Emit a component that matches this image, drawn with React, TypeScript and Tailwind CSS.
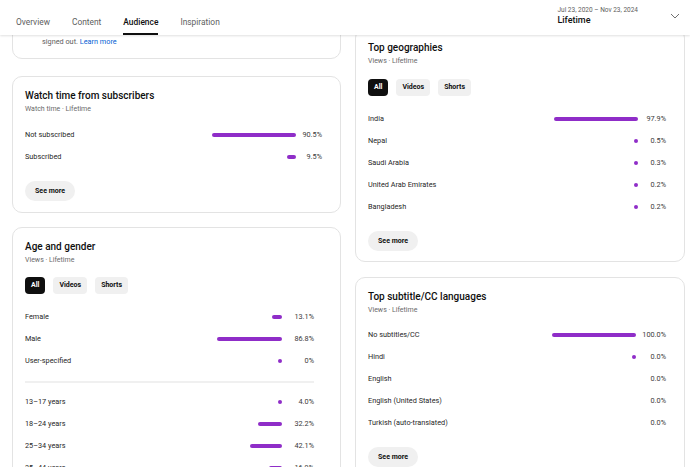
import React from 'react';

type Row = { label: string; pct: string; bar: number | 'dot' | 'none' };

const PURPLE = 'bg-[#8f2dc8]';

function StatRow({ row, maxBar, pctW }: { row: Row; maxBar: number; pctW: string }) {
  return (
    <div className="flex h-[22px] items-center text-[7.3px] text-[#1f1f1f]">
      <div className="flex-1 truncate">{row.label}</div>
      <div className="flex items-center justify-end" style={{ width: maxBar }}>
        {row.bar === 'dot' ? (
          <div className={`h-[4.5px] w-[4.5px] rounded-full ${PURPLE}`} />
        ) : row.bar === 'none' ? null : (
          <div className={`h-[3.5px] rounded-full ${PURPLE}`} style={{ width: (row.bar / 100) * maxBar }} />
        )}
      </div>
      <div className={`${pctW} text-right text-[#3a3a3a]`}>{row.pct}</div>
    </div>
  );
}

function Chips() {
  return (
    <div className="flex gap-[8px] text-[7px] font-bold">
      <div className="flex h-[17px] items-center rounded-[4px] bg-[#0f0f0f] px-[6px] text-white">All</div>
      <div className="flex h-[17px] items-center rounded-[4px] bg-[#f0f0f0] px-[6px] text-[#0f0f0f]">Videos</div>
      <div className="flex h-[17px] items-center rounded-[4px] bg-[#f0f0f0] px-[6px] text-[#0f0f0f]">Shorts</div>
    </div>
  );
}

function SeeMore({ className = '' }: { className?: string }) {
  return (
    <div className={`flex h-[20px] w-[50px] items-center justify-center rounded-full bg-[#f0f0f0] text-[7px] font-bold text-[#0f0f0f] ${className}`}>
      See more
    </div>
  );
}

function CardHead({ title, sub }: { title: string; sub: string }) {
  return (
    <div>
      <div className="text-[10px] font-medium leading-[12px] text-[#0f0f0f]">{title}</div>
      <div className="mt-[2px] text-[7px] leading-[10px] text-[#6a6a6a]">{sub}</div>
    </div>
  );
}

const subs: Row[] = [
  { label: 'Not subscribed', pct: '90.5%', bar: 90.5 },
  { label: 'Subscribed', pct: '9.5%', bar: 9.5 },
];

const gender: Row[] = [
  { label: 'Female', pct: '13.1%', bar: 13.1 },
  { label: 'Male', pct: '86.8%', bar: 86.8 },
  { label: 'User-specified', pct: '0%', bar: 'dot' },
];

const ages: Row[] = [
  { label: '13–17 years', pct: '4.0%', bar: 'dot' },
  { label: '18–24 years', pct: '32.2%', bar: 32.2 },
  { label: '25–34 years', pct: '42.1%', bar: 42.1 },
  { label: '35–44 years', pct: '16.9%', bar: 16.9 },
];

const geos: Row[] = [
  { label: 'India', pct: '97.9%', bar: 97.9 },
  { label: 'Nepal', pct: '0.5%', bar: 'dot' },
  { label: 'Saudi Arabia', pct: '0.3%', bar: 'dot' },
  { label: 'United Arab Emirates', pct: '0.2%', bar: 'dot' },
  { label: 'Bangladesh', pct: '0.2%', bar: 'dot' },
];

const langs: Row[] = [
  { label: 'No subtitles/CC', pct: '100.0%', bar: 100 },
  { label: 'Hindi', pct: '0.0%', bar: 'dot' },
  { label: 'English', pct: '0.0%', bar: 'none' },
  { label: 'English (United States)', pct: '0.0%', bar: 'none' },
  { label: 'Turkish (auto-translated)', pct: '0.0%', bar: 'none' },
];

const tabs = ['Overview', 'Content', 'Audience', 'Inspiration'];

export default function App() {
  return (
    <div className="relative h-[467px] w-[690px] overflow-hidden bg-white font-['Roboto',sans-serif]">
      <div className="relative z-10 flex h-[35px] justify-between bg-white shadow-[0_1px_2px_rgba(0,0,0,0.12)]">
        <div className="flex gap-[22px] pl-[16px]">
          {tabs.map(t => (
            <div key={t} className="flex h-[35px] items-end">
              <span
                className={`border-b-2 pb-[5px] text-[8.4px] leading-[11px] ${
                  t === 'Audience' ? 'border-[#0f0f0f] font-medium text-[#0f0f0f]' : 'border-transparent text-[#606060]'
                }`}
              >
                {t}
              </span>
            </div>
          ))}
        </div>
        <div className="flex items-center gap-[32px] self-start pr-[10px] pt-[5px]">
          <div>
            <div className="text-[6.5px] leading-[10px] text-[#606060]">Jul 23, 2020 – Nov 23, 2024</div>
            <div className="text-[9px] font-medium leading-[11px] text-[#0f0f0f]">Lifetime</div>
          </div>
          <svg width="10" height="6" viewBox="0 0 10 6" fill="none" stroke="#606060" strokeWidth="0.9">
            <path d="M1 1l4 4 4-4" />
          </svg>
        </div>
      </div>

      <div className="flex gap-[14px] px-[12px]">
        {/* left column */}
        <div className="-mt-[40px] w-[329px] shrink-0">
          <div className="flex h-[64px] flex-col justify-end rounded-[10px] border border-[#e3e3e3] pb-[11px] pl-[29px]">
            <div className="text-[7.3px] leading-[10px] text-[#606060]">
              signed out. <span className="text-[#065fd4]">Learn more</span>
            </div>
          </div>

          <div className="mt-[17px] rounded-[10px] border border-[#e3e3e3] px-[12px] pb-[11px] pt-[13px]">
            <CardHead title="Watch time from subscribers" sub="Watch time · Lifetime" />
            <div className="mt-[10px] pr-[6px]">
              {subs.map(r => (
                <StatRow key={r.label} row={r} maxBar={93} pctW="w-[26px]" />
              ))}
            </div>
            <SeeMore className="mt-[13px]" />
          </div>

          <div className="mt-[14px] rounded-[10px] border border-[#e3e3e3] px-[12px] pt-[13px] pb-[12px]">
            <CardHead title="Age and gender" sub="Views · Lifetime" />
            <div className="mt-[12px]">
              <Chips />
            </div>
            <div className="mt-[12px] pr-[14px]">
              {gender.map(r => (
                <StatRow key={r.label} row={r} maxBar={75} pctW="w-[32px]" />
              ))}
              <div className="mb-[8px] mt-[9px] h-[2px] bg-[#f0f0f0]" />
              {ages.map(r => (
                <StatRow key={r.label} row={r} maxBar={75} pctW="w-[32px]" />
              ))}
            </div>
          </div>
        </div>

        {/* right column */}
        <div className="-mt-[7px] w-[330px] shrink-0">
          <div className="rounded-[10px] border border-[#e3e3e3] px-[12px] pb-[10px] pt-[13px]">
            <CardHead title="Top geographies" sub="Views · Lifetime" />
            <div className="mt-[13px]">
              <Chips />
            </div>
            <div className="mt-[12px] pr-[6px]">
              {geos.map(r => (
                <StatRow key={r.label} row={r} maxBar={86} pctW="w-[28px]" />
              ))}
            </div>
            <SeeMore className="mt-[13px]" />
          </div>

          <div className="mt-[15px] rounded-[10px] border border-[#e3e3e3] px-[12px] pb-[12px] pt-[13px]">
            <CardHead title="Top subtitle/CC languages" sub="Views · Lifetime" />
            <div className="mt-[9px] pr-[6px]">
              {langs.map(r => (
                <StatRow key={r.label} row={r} maxBar={84} pctW="w-[30px]" />
              ))}
            </div>
            <SeeMore className="mt-[13px]" />
          </div>
        </div>
      </div>
    </div>
  );
}
